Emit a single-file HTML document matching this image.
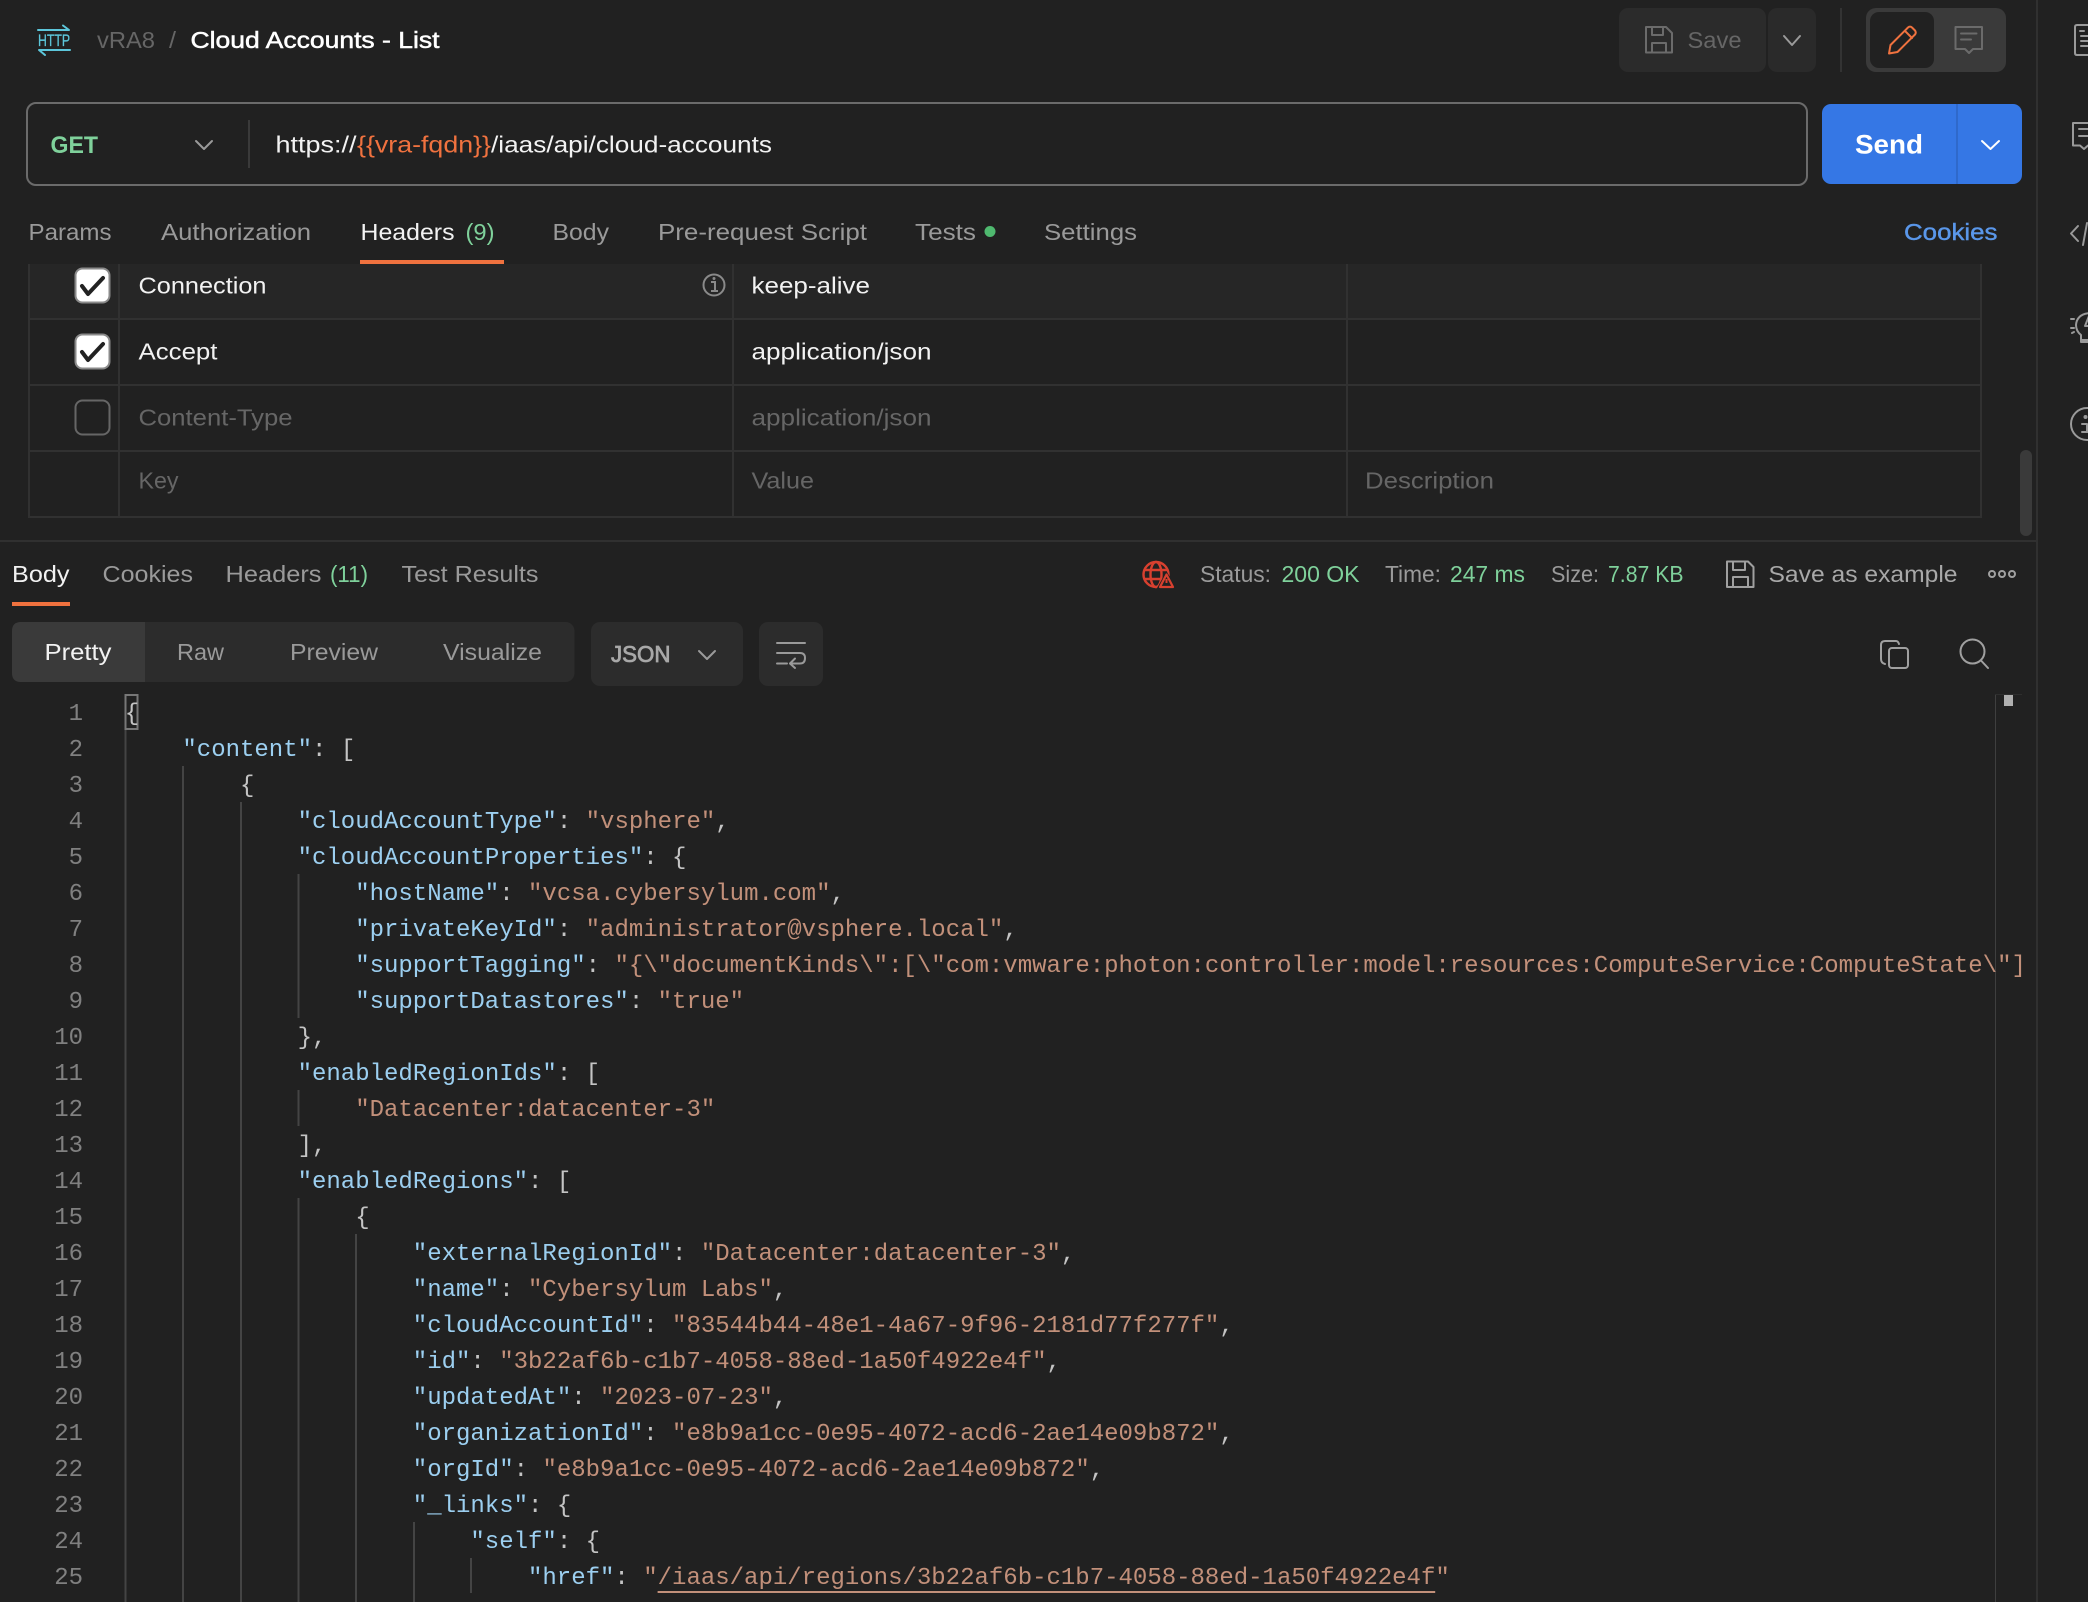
<!DOCTYPE html>
<html lang="en">
<head>
<meta charset="utf-8">
<title>vRA8 / Cloud Accounts - List</title>
<style>
html,body{margin:0;padding:0;background:#212121;width:2088px;height:1602px;overflow:hidden}
svg{display:block}
text{font-family:"Liberation Sans",sans-serif;font-size:23px}
.t{fill:#9a9a9a}
.w{fill:#f2f2f2}
.g{fill:#7fd19b}
.d{fill:#666}
.m{font-family:"Liberation Mono",monospace;font-size:24px;fill:#c4c4c4}
.n{font-family:"Liberation Mono",monospace;font-size:24px;fill:#808080;text-anchor:end}
.k{fill:#9ccff0}
.s{fill:#c2907a}
.i{fill:none;stroke-linecap:round;stroke-linejoin:round}
</style>
</head>
<body>
<svg xmlns="http://www.w3.org/2000/svg" width="2088" height="1602" viewBox="0 0 2088 1602">
<rect width="2088" height="1602" fill="#212121"/>

<!-- HTTP icon -->
<g class="i" stroke="#5cc6da" stroke-width="2">
<path d="M38 30H69L63 25.500"/>
<path d="M70 50H39L45 55"/>
</g>
<text x="38" y="46" textLength="32" lengthAdjust="spacingAndGlyphs" style="font-size:17px;fill:#5cc6da" stroke="#5cc6da" stroke-width=".3">HTTP</text>

<!-- breadcrumb -->
<text x="97" y="48" textLength="58" lengthAdjust="spacingAndGlyphs" class="d">vRA8</text>
<text x="169" y="48" textLength="7" lengthAdjust="spacingAndGlyphs" class="d">/</text>
<text x="190.500" y="48" textLength="249" lengthAdjust="spacingAndGlyphs" fill="#fff" stroke="#fff" stroke-width=".5">Cloud Accounts - List</text>

<!-- Save group -->
<rect x="1619" y="8" width="147" height="64" rx="9" fill="#2b2b2b"/>
<rect x="1768" y="8" width="48" height="64" rx="9" fill="#2a2a2a"/>
<g class="i" stroke="#6b6b6b" stroke-width="2">
<path d="M1646 27H1666L1672 33V52.500H1646Z"/>
<path d="M1652 27V35H1663V27"/>
<path d="M1652 52V43H1666V52"/>
</g>
<text x="1687.500" y="48" textLength="54" lengthAdjust="spacingAndGlyphs" class="d">Save</text>
<path class="i" d="M1784 36L1792 45L1800 36" stroke="#9a9a9a" stroke-width="2"/>
<rect x="1840" y="8" width="2" height="64" fill="#333"/>

<!-- toggle -->
<rect x="1866" y="8" width="140" height="64" rx="10" fill="#3a3a3a"/>
<rect x="1870" y="12" width="64" height="56" rx="9" fill="#212121"/>
<g class="i" stroke="#f0723f" stroke-width="2">
<path d="M1890.500 45L1908 27.500Q1910 25.800 1912 27.500L1915 30.500Q1916.500 32.500 1915 34.500L1897.500 52L1889 53.500Z"/>
<path d="M1905 31L1912 38"/>
</g>
<g class="i" stroke="#6b6b6b" stroke-width="2">
<path d="M1955.500 27H1982V49H1973L1969 53L1965 49H1955.500Z"/>
<path d="M1961 33.500H1976.500M1961 39.500H1971"/>
</g>

<!-- right side bar -->
<rect x="2036" y="0" width="2" height="1602" fill="#303030"/>
<g class="i" stroke="#9a9a9a" stroke-width="2">
<path d="M2095 25H2077Q2075 25 2075 27V53Q2075 55 2077 55H2095"/>
<path d="M2080 31H2084M2081 36H2095M2081 41H2095M2081 46H2095"/>
<path d="M2095 123H2073V145.500H2080L2084 149L2088 145.500H2095"/>
<path d="M2079 129H2095M2079 136H2095"/>
<path d="M2078 226L2071 233.500L2078 241"/>
<path d="M2087 223L2083 245"/>
<path d="M2095 313Q2077 312 2076 325Q2076 331 2081 335V342H2095"/>
<path d="M2089 316L2085 326H2092L2089 332"/>
<path d="M2071 319H2074M2071 328H2074M2072 333L2074 332"/>
<circle cx="2087" cy="424" r="16"/>
<path d="M2082 424H2087V432M2082 432H2095"/>
</g>
<rect x="2081" y="339" width="14" height="4" fill="#9a9a9a"/>
<circle cx="2085.500" cy="417" r="2" fill="#9a9a9a"/>

<!-- URL bar -->
<rect x="27" y="103" width="1780" height="82" rx="9" fill="#212121" stroke="#6b6b6b" stroke-width="2"/>
<text x="50.500" y="153" textLength="47.500" lengthAdjust="spacingAndGlyphs" style="font-weight:700;font-size:24px" class="g">GET</text>
<path class="i" d="M196 141L204 149L212 141" stroke="#9a9a9a" stroke-width="2"/>
<rect x="248" y="120" width="2" height="48" fill="#3a3a3a"/>
<text x="275.500" y="152.500" textLength="81" lengthAdjust="spacingAndGlyphs" class="w">https://</text>
<text x="357" y="152.500" textLength="134" lengthAdjust="spacingAndGlyphs" fill="#f0723f">{{vra-fqdn}}</text>
<text x="491" y="152.500" textLength="281" lengthAdjust="spacingAndGlyphs" class="w">/iaas/api/cloud-accounts</text>

<!-- Send -->
<rect x="1822" y="104" width="200" height="80" rx="9" fill="#3577e5"/>
<rect x="1956" y="104" width="2" height="80" fill="#2f69cb"/>
<text x="1855" y="153.500" textLength="68" lengthAdjust="spacingAndGlyphs" style="font-weight:700;font-size:27px" fill="#fff">Send</text>
<path class="i" d="M1982 141L1990.500 149L1999 141" stroke="#fff" stroke-width="2"/>

<!-- Request tabs -->
<text x="28.500" y="240" textLength="83" lengthAdjust="spacingAndGlyphs" class="t">Params</text>
<text x="161" y="240" textLength="150" lengthAdjust="spacingAndGlyphs" class="t">Authorization</text>
<text x="360.500" y="240" textLength="94" lengthAdjust="spacingAndGlyphs" class="w">Headers</text>
<text x="465.500" y="240" textLength="29" lengthAdjust="spacingAndGlyphs" class="g">(9)</text>
<text x="552.500" y="240" textLength="56.500" lengthAdjust="spacingAndGlyphs" class="t">Body</text>
<text x="658" y="240" textLength="209" lengthAdjust="spacingAndGlyphs" class="t">Pre-request Script</text>
<text x="915" y="240" textLength="61" lengthAdjust="spacingAndGlyphs" class="t">Tests</text>
<circle cx="990" cy="231.500" r="5.500" fill="#4fb96f"/>
<text x="1044" y="240" textLength="93" lengthAdjust="spacingAndGlyphs" class="t">Settings</text>
<text x="1904" y="240" textLength="93.500" lengthAdjust="spacingAndGlyphs" fill="#5a97ea" stroke="#5a97ea" stroke-width=".4">Cookies</text>
<rect x="360" y="260" width="144" height="4" fill="#f0723f"/>

<!-- Header table -->
<rect x="29" y="264" width="1952" height="55" fill="#262626"/>
<g fill="#313131">
<rect x="29" y="318" width="1953" height="2"/>
<rect x="29" y="384" width="1953" height="2"/>
<rect x="29" y="450" width="1953" height="2"/>
<rect x="29" y="516" width="1953" height="2"/>
<rect x="28" y="264" width="2" height="254"/>
<rect x="118" y="264" width="2" height="254"/>
<rect x="732" y="264" width="2" height="254"/>
<rect x="1346" y="264" width="2" height="254"/>
<rect x="1980" y="264" width="2" height="254"/>
</g>

<rect x="75.500" y="268.500" width="34" height="34" rx="7" fill="#fff" stroke="#8a8a8a" stroke-width="2"/>
<path class="i" d="M82 286L88 294L103 278" stroke="#222" stroke-width="4"/>
<rect x="75.500" y="334.500" width="34" height="34" rx="7" fill="#fff" stroke="#8a8a8a" stroke-width="2"/>
<path class="i" d="M82 352L88 360L103 344" stroke="#222" stroke-width="4"/>
<rect x="75.500" y="400.500" width="34" height="34" rx="7" fill="none" stroke="#666" stroke-width="2"/>

<text x="138.500" y="293.500" textLength="128" lengthAdjust="spacingAndGlyphs" class="w">Connection</text>
<text x="138.500" y="359.500" textLength="79" lengthAdjust="spacingAndGlyphs" class="w">Accept</text>
<text x="138.500" y="425.500" textLength="154" lengthAdjust="spacingAndGlyphs" class="d">Content-Type</text>
<text x="138.500" y="488.500" textLength="40" lengthAdjust="spacingAndGlyphs" class="d">Key</text>
<circle cx="714" cy="285" r="10.500" fill="none" stroke="#8a8a8a" stroke-width="2"/>
<path d="M711 282H715V290M711 291H718" fill="none" stroke="#8a8a8a" stroke-width="2"/>
<circle cx="714" cy="278.500" r="1.500" fill="#8a8a8a"/>
<text x="751.500" y="293.500" textLength="118.500" lengthAdjust="spacingAndGlyphs" class="w">keep-alive</text>
<text x="751.500" y="359.500" textLength="180" lengthAdjust="spacingAndGlyphs" class="w">application/json</text>
<text x="751.500" y="425.500" textLength="180" lengthAdjust="spacingAndGlyphs" class="d">application/json</text>
<text x="751.500" y="488.500" textLength="62.500" lengthAdjust="spacingAndGlyphs" class="d">Value</text>
<text x="1365" y="488.500" textLength="129" lengthAdjust="spacingAndGlyphs" class="d">Description</text>

<rect x="2020" y="450" width="12" height="86" rx="6" fill="#3a3a3a"/>
<rect x="0" y="540" width="2036" height="2" fill="#303030"/>

<!-- Response tabs -->
<text x="12" y="582" textLength="57.500" lengthAdjust="spacingAndGlyphs" class="w">Body</text>
<text x="102.500" y="582" textLength="90.500" lengthAdjust="spacingAndGlyphs" class="t">Cookies</text>
<text x="225.500" y="582" textLength="96" lengthAdjust="spacingAndGlyphs" class="t">Headers</text>
<text x="330" y="582" textLength="38" lengthAdjust="spacingAndGlyphs" class="g">(11)</text>
<text x="401.500" y="582" textLength="137" lengthAdjust="spacingAndGlyphs" class="t">Test Results</text>
<rect x="12" y="602" width="58" height="4" fill="#f0723f"/>

<!-- Status -->
<g class="i" stroke="#d8402f" stroke-width="2.400">
<circle cx="1156" cy="574.500" r="12.500"/>
<ellipse cx="1156" cy="574.500" rx="5.500" ry="12.500"/>
<path d="M1145 570H1167M1145 579H1160"/>
</g>
<path d="M1166.500 571L1177 590H1156Z" fill="#212121"/>
<path class="i" d="M1166.500 574.500L1173 587H1160Z" fill="#212121" stroke="#d8402f" stroke-width="2.200"/>
<path d="M1166.500 579V583" stroke="#d8402f" stroke-width="2"/>
<text x="1200" y="582" textLength="71" lengthAdjust="spacingAndGlyphs" class="t">Status:</text>
<text x="1281.500" y="582" textLength="78" lengthAdjust="spacingAndGlyphs" class="g">200 OK</text>
<text x="1385" y="582" textLength="56" lengthAdjust="spacingAndGlyphs" class="t">Time:</text>
<text x="1450" y="582" textLength="75" lengthAdjust="spacingAndGlyphs" class="g">247 ms</text>
<text x="1551" y="582" textLength="48" lengthAdjust="spacingAndGlyphs" class="t">Size:</text>
<text x="1608" y="582" textLength="75.500" lengthAdjust="spacingAndGlyphs" class="g">7.87 KB</text>
<g class="i" stroke="#a0a0a0" stroke-width="2">
<path d="M1727 561.500H1748L1753.500 567V587H1727Z"/>
<path d="M1733 561.500V570H1745V561.500"/>
<path d="M1733 587V577H1748V587"/>
</g>
<text x="1768.500" y="582" textLength="189" lengthAdjust="spacingAndGlyphs" fill="#a8a8a8">Save as example</text>
<g fill="none" stroke="#a0a0a0" stroke-width="2">
<circle cx="1992" cy="574" r="3"/>
<circle cx="2002" cy="574" r="3"/>
<circle cx="2012" cy="574" r="3"/>
</g>

<!-- Body toolbar -->
<rect x="12" y="622" width="562.500" height="60" rx="9" fill="#2c2c2c"/>
<path d="M21 622H145V682H21Q12 682 12 673V631Q12 622 21 622Z" fill="#3a3a3a"/>
<text x="44.500" y="660" textLength="67" lengthAdjust="spacingAndGlyphs" class="w">Pretty</text>
<text x="177" y="660" textLength="47" lengthAdjust="spacingAndGlyphs" class="t">Raw</text>
<text x="290" y="660" textLength="88" lengthAdjust="spacingAndGlyphs" class="t">Preview</text>
<text x="443" y="660" textLength="99" lengthAdjust="spacingAndGlyphs" class="t">Visualize</text>
<rect x="591" y="622" width="152" height="64" rx="9" fill="#2c2c2c"/>
<text x="611" y="662" textLength="59.500" lengthAdjust="spacingAndGlyphs" fill="#a8a8a8" stroke="#a8a8a8" stroke-width=".8">JSON</text>
<path class="i" d="M699 651L707 659L715 651" stroke="#9a9a9a" stroke-width="2"/>
<rect x="759" y="622" width="64" height="64" rx="9" fill="#2c2c2c"/>
<g class="i" stroke="#9a9a9a" stroke-width="2">
<path d="M777 643H805M777 653H800Q805 653 805 658Q805 663.500 800 663.500H790"/>
<path d="M777 663.500H787M795 658.500L790 663.500L795 668"/>
</g>

<!-- copy + search -->
<g class="i" stroke="#a0a0a0" stroke-width="2">
<rect x="1889" y="648" width="19" height="20" rx="3"/>
<path d="M1885 664Q1881 663 1881 659V645Q1881 641 1885 641H1896Q1898 641 1899 644"/>
<circle cx="1972.500" cy="651.500" r="12"/>
<path d="M1981 660.500L1988 668"/>
</g>

<!-- minimap -->
<rect x="1995" y="694" width="1" height="908" fill="#3f3f3f"/>
<rect x="1995" y="694" width="27" height="1" fill="#2e2e2e"/>
<rect x="2004" y="695" width="9" height="11" fill="#b0b0b0"/>

<!-- indent guides -->
<g fill="#444">
<rect x="124.500" y="729" width="2" height="873"/>
<rect x="182" y="766" width="2" height="836"/>
<rect x="240" y="802" width="2" height="800"/>
<rect x="297.500" y="874" width="2" height="144"/>
<rect x="297.500" y="1090" width="2" height="36"/>
<rect x="297.500" y="1198" width="2" height="404"/>
<rect x="355" y="1234" width="2" height="368"/>
<rect x="413" y="1522" width="2" height="80"/>
<rect x="470" y="1558" width="2" height="35"/>
</g>
<rect x="125.500" y="695" width="12" height="34" fill="none" stroke="#777" stroke-width="2"/>

<g transform="translate(0,-.5)">
<!-- line numbers -->
<text class="n" x="83" y="720.500">1</text>
<text class="n" x="83" y="756.500">2</text>
<text class="n" x="83" y="792.500">3</text>
<text class="n" x="83" y="828.500">4</text>
<text class="n" x="83" y="864.500">5</text>
<text class="n" x="83" y="900.500">6</text>
<text class="n" x="83" y="936.500">7</text>
<text class="n" x="83" y="972.500">8</text>
<text class="n" x="83" y="1008.500">9</text>
<text class="n" x="83" y="1044.500">10</text>
<text class="n" x="83" y="1080.500">11</text>
<text class="n" x="83" y="1116.500">12</text>
<text class="n" x="83" y="1152.500">13</text>
<text class="n" x="83" y="1188.500">14</text>
<text class="n" x="83" y="1224.500">15</text>
<text class="n" x="83" y="1260.500">16</text>
<text class="n" x="83" y="1296.500">17</text>
<text class="n" x="83" y="1332.500">18</text>
<text class="n" x="83" y="1368.500">19</text>
<text class="n" x="83" y="1404.500">20</text>
<text class="n" x="83" y="1440.500">21</text>
<text class="n" x="83" y="1476.500">22</text>
<text class="n" x="83" y="1512.500">23</text>
<text class="n" x="83" y="1548.500">24</text>
<text class="n" x="83" y="1584.500">25</text>

<!-- code -->
<text class="m" x="124.800" y="720.500">{</text>
<text class="m" x="182.400" y="756.500"><tspan class="k">"content"</tspan>: [</text>
<text class="m" x="240" y="792.500">{</text>
<text class="m" x="297.600" y="828.500"><tspan class="k">"cloudAccountType"</tspan>: <tspan class="s">"vsphere"</tspan>,</text>
<text class="m" x="297.600" y="864.500"><tspan class="k">"cloudAccountProperties"</tspan>: {</text>
<text class="m" x="355.200" y="900.500"><tspan class="k">"hostName"</tspan>: <tspan class="s">"vcsa.cybersylum.com"</tspan>,</text>
<text class="m" x="355.200" y="936.500"><tspan class="k">"privateKeyId"</tspan>: <tspan class="s">"administrator@vsphere.local"</tspan>,</text>
<text class="m" x="355.200" y="972.500"><tspan class="k">"supportTagging"</tspan>: <tspan class="s">"{\"documentKinds\":[\"com:vmware:photon:controller:model:resources:ComputeService:ComputeState\"]</tspan></text>
<text class="m" x="355.200" y="1008.500"><tspan class="k">"supportDatastores"</tspan>: <tspan class="s">"true"</tspan></text>
<text class="m" x="297.600" y="1044.500">},</text>
<text class="m" x="297.600" y="1080.500"><tspan class="k">"enabledRegionIds"</tspan>: [</text>
<text class="m" x="355.200" y="1116.500"><tspan class="s">"Datacenter:datacenter-3"</tspan></text>
<text class="m" x="297.600" y="1152.500">],</text>
<text class="m" x="297.600" y="1188.500"><tspan class="k">"enabledRegions"</tspan>: [</text>
<text class="m" x="355.200" y="1224.500">{</text>
<text class="m" x="412.800" y="1260.500"><tspan class="k">"externalRegionId"</tspan>: <tspan class="s">"Datacenter:datacenter-3"</tspan>,</text>
<text class="m" x="412.800" y="1296.500"><tspan class="k">"name"</tspan>: <tspan class="s">"Cybersylum Labs"</tspan>,</text>
<text class="m" x="412.800" y="1332.500"><tspan class="k">"cloudAccountId"</tspan>: <tspan class="s">"83544b44-48e1-4a67-9f96-2181d77f277f"</tspan>,</text>
<text class="m" x="412.800" y="1368.500"><tspan class="k">"id"</tspan>: <tspan class="s">"3b22af6b-c1b7-4058-88ed-1a50f4922e4f"</tspan>,</text>
<text class="m" x="412.800" y="1404.500"><tspan class="k">"updatedAt"</tspan>: <tspan class="s">"2023-07-23"</tspan>,</text>
<text class="m" x="412.800" y="1440.500"><tspan class="k">"organizationId"</tspan>: <tspan class="s">"e8b9a1cc-0e95-4072-acd6-2ae14e09b872"</tspan>,</text>
<text class="m" x="412.800" y="1476.500"><tspan class="k">"orgId"</tspan>: <tspan class="s">"e8b9a1cc-0e95-4072-acd6-2ae14e09b872"</tspan>,</text>
<text class="m" x="412.800" y="1512.500"><tspan class="k">"_links"</tspan>: {</text>
<text class="m" x="470.400" y="1548.500"><tspan class="k">"self"</tspan>: {</text>
<text class="m" x="528" y="1584.500"><tspan class="k">"href"</tspan>: <tspan class="s">"/iaas/api/regions/3b22af6b-c1b7-4058-88ed-1a50f4922e4f"</tspan></text>
</g>
<rect x="657.600" y="1591" width="777.600" height="2" fill="#c2907a"/>
</svg>
</body>
</html>
